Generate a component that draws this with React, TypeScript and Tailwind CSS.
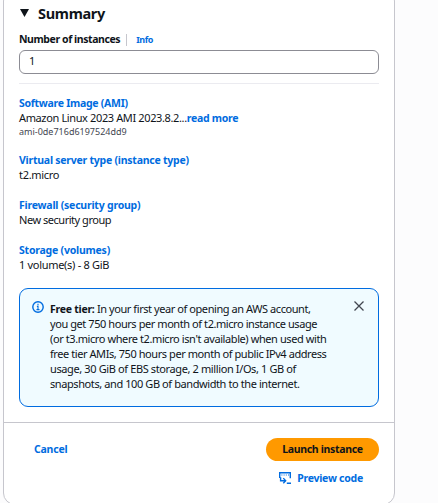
import React from "react";

type SectionProps = { title: string; titleClass: string; children: React.ReactNode };

function Section({ title, titleClass, children }: SectionProps) {
  return (
    <section className="mb-[15px]">
      <h3 className={`h-[15px] pt-px text-[10.5px] leading-[15px] font-bold text-[#006ce0] ${titleClass}`}>{title}</h3>
      {children}
    </section>
  );
}

function InfoIcon() {
  return (
    <svg className="mt-[12px] h-3 w-3 shrink-0" viewBox="0 0 12 12" fill="none" stroke="#006ce0" strokeWidth="1.4">
      <circle cx="6" cy="6" r="5.2" />
      <path d="M6 2.8v1.4M4.9 5.4H6v3.2M4.5 8.6h3" strokeWidth="1.1" />
    </svg>
  );
}

function PreviewIcon() {
  return (
    <svg className="h-3 w-3 shrink-0" viewBox="0 0 12 12" fill="none" stroke="#006ce0" strokeWidth="1.4">
      <path d="M.7 6V.7h10.6v5.6" />
      <path d="M2.4 3h1M4.6 3h1M6.8 3h1M9 3h1" strokeWidth="1" />
      <path d="M1.6 5.2v3.5h4.8M4.3 6.1l2.4 2.6-2.4 2.6M7.8 11.3H12" />
    </svg>
  );
}

const freeTierLines = [
  { text: "you get 750 hours per month of t2.micro instance usage", tracking: "tracking-[-0.43px]" },
  { text: "(or t3.micro where t2.micro isn't available) when used with", tracking: "tracking-[-0.41px]" },
  { text: "free tier AMIs, 750 hours per month of public IPv4 address", tracking: "tracking-[-0.43px]" },
  { text: "usage, 30 GiB of EBS storage, 2 million I/Os, 1 GB of", tracking: "tracking-[-0.38px]" },
  { text: "snapshots, and 100 GB of bandwidth to the internet.", tracking: "tracking-[-0.41px]" },
];

export default function App() {
  return (
    <div className="h-[503px] w-[438px] overflow-hidden bg-[#fcfcfd] pl-[3px] font-['Noto_Sans',sans-serif] text-[11px] leading-[15px] whitespace-nowrap text-[#0f141a]">
      <div className="-mt-[11px] flex h-[516px] w-[392px] flex-col rounded-xl border border-[#c6c6cd] bg-white pt-[9px]">
        <div className="h-[423px] px-[15px]">
          <h2 className="flex h-[28px] items-center text-[14.5px] leading-[20px] font-bold tracking-[-0.3px]">
            <svg className="mr-[9px] ml-px h-2 w-[9px]" viewBox="0 0 9 8"><path d="M0 0h9L4.5 8z" fill="#0f141a" /></svg>
            Summary
          </h2>
          <div className="mt-[5px] flex h-[15px] items-center">
            <label className="text-[10.5px] font-bold tracking-[-0.42px]">Number of instances</label>
            <span className="ml-[6px] h-[12px] w-px bg-[#c6c6cd]" />
            <a className="ml-[9px] text-[9px] font-bold tracking-[-0.4px] text-[#006ce0]">Info</a>
          </div>
          <div className="mt-[3px] flex h-[24px] items-center rounded-[6px] border border-[#8c8c94] px-[9px] pb-[3px]">1</div>
          <hr className="mt-[9px] mb-[11px] border-[#ebebf0]" />
          <Section title="Software Image (AMI)" titleClass="tracking-[-0.28px]">
            <p className="h-[15px]"><span className="tracking-[-0.37px]">Amazon Linux 2023 AMI 2023.8.2...</span><span className="text-[10.5px] leading-none font-bold tracking-[-0.27px] text-[#006ce0]">read more</span></p>
            <p className="h-[12px] pt-px text-[9px] leading-[12px] text-[#424650]">ami-0de716d6197524dd9</p>
          </Section>
          <Section title="Virtual server type (instance type)" titleClass="tracking-[-0.24px]"><p className="tracking-[-0.3px]">t2.micro</p></Section>
          <Section title="Firewall (security group)" titleClass="tracking-[-0.22px]"><p className="tracking-[-0.47px]">New security group</p></Section>
          <Section title="Storage (volumes)" titleClass="tracking-[-0.22px]"><p className="tracking-[-0.3px]">1 volume(s) - 8 GiB</p></Section>
          <div className="mt-[16px] flex h-[119px] rounded-[9px] border border-[#006ce0] bg-[#f0fbff] pl-[12px]">
            <InfoIcon />
            <div className="ml-[6px] flex-1 pt-[12px]">
              <p className="h-[15px]"><b className="text-[10.5px] leading-none font-bold tracking-[-0.26px]">Free tier:</b><span className="tracking-[-0.43px]"> In your first year of opening an AWS account,</span></p>
              {freeTierLines.map((line) => (
                <p key={line.text} className={line.tracking}>{line.text}</p>
              ))}
            </div>
            <svg className="mt-[12px] mr-[14px] h-[10px] w-[10px]" viewBox="0 0 10 10" fill="none" stroke="#424650" strokeWidth="1.3"><path d="M.5.5l9 9M9.5.5l-9 9" /></svg>
          </div>
        </div>
        <footer className="border-t border-[#c6c6cd] px-[15px] pt-[15px] text-[10.5px] leading-[15px] font-bold">
          <div className="flex items-center justify-between">
            <a className="pl-[15px] tracking-[-0.22px] text-[#006ce0]">Cancel</a>
            <button className="h-[23px] w-[113px] rounded-full bg-[#ff9900] text-center tracking-[-0.32px]">Launch instance</button>
          </div>
          <div className="mt-[9px] flex h-[15px] items-center justify-end pr-[16px] tracking-[-0.25px] text-[#006ce0]">
            <PreviewIcon />
            <span className="ml-[6px] pt-px">Preview code</span>
          </div>
        </footer>
      </div>
    </div>
  );
}
